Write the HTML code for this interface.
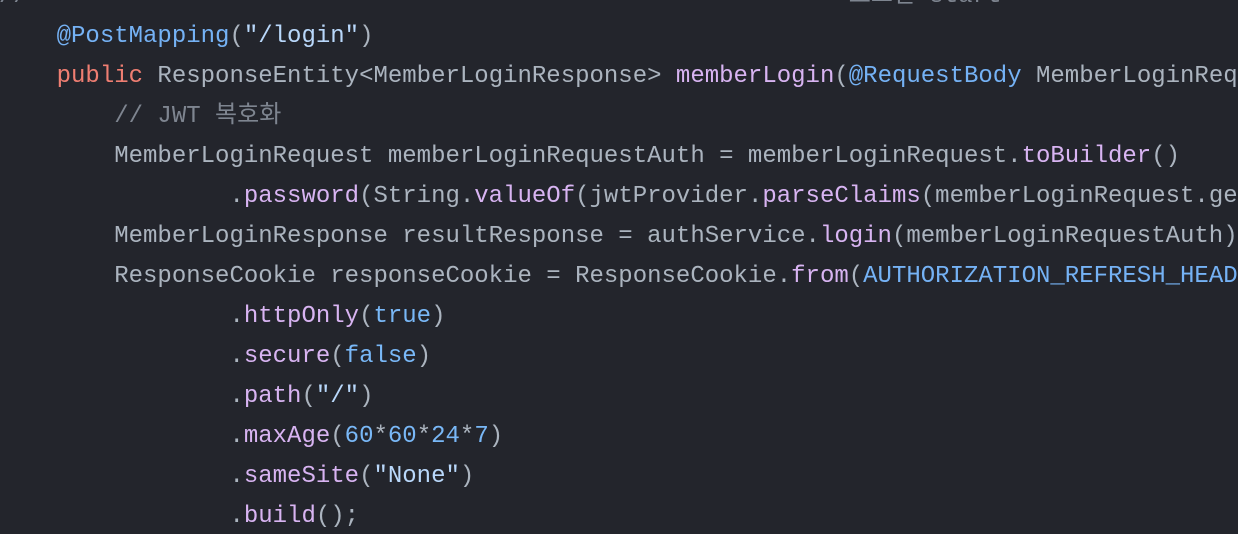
<!DOCTYPE html>
<html><head><meta charset="utf-8"><style>
html,body{margin:0;padding:0;background:#23252c;width:1238px;height:534px;overflow:hidden}
.w{position:absolute;left:0;top:0;width:1238px;height:534px;overflow:hidden}
pre{margin:0;position:absolute;left:-1px;top:-23px;font-family:"Liberation Mono","Noto Sans CJK KR",monospace;font-size:24px;line-height:40px;color:#abb4bf;white-space:pre}
.k{color:#ef7e72}.a{color:#75b2f5}.f{color:#d8b4f2}.s{color:#b9d8fb}.c{color:#7e8590}.n{color:#79b8f7}
</style></head><body><div class="w"><pre><span class="c">//                                                         로그인 start</span>
    <span class="a">@PostMapping</span>(<span class="s">"/login"</span>)
    <span class="k">public</span> ResponseEntity&lt;MemberLoginResponse&gt; <span class="f">memberLogin</span>(<span class="a">@RequestBody</span> MemberLoginReq
        <span class="c">// JWT 복호화</span>
        MemberLoginRequest memberLoginRequestAuth = memberLoginRequest.<span class="f">toBuilder</span>()
                .<span class="f">password</span>(String.<span class="f">valueOf</span>(jwtProvider.<span class="f">parseClaims</span>(memberLoginRequest.ge
        MemberLoginResponse resultResponse = authService.<span class="f">login</span>(memberLoginRequestAuth)
        ResponseCookie responseCookie = ResponseCookie.<span class="f">from</span>(<span class="a">AUTHORIZATION_REFRESH_HEAD</span>
                .<span class="f">httpOnly</span>(<span class="n">true</span>)
                .<span class="f">secure</span>(<span class="n">false</span>)
                .<span class="f">path</span>(<span class="s">"/"</span>)
                .<span class="f">maxAge</span>(<span class="n">60</span>*<span class="n">60</span>*<span class="n">24</span>*<span class="n">7</span>)
                .<span class="f">sameSite</span>(<span class="s">"None"</span>)
                .<span class="f">build</span>();
</pre></div></body></html>
